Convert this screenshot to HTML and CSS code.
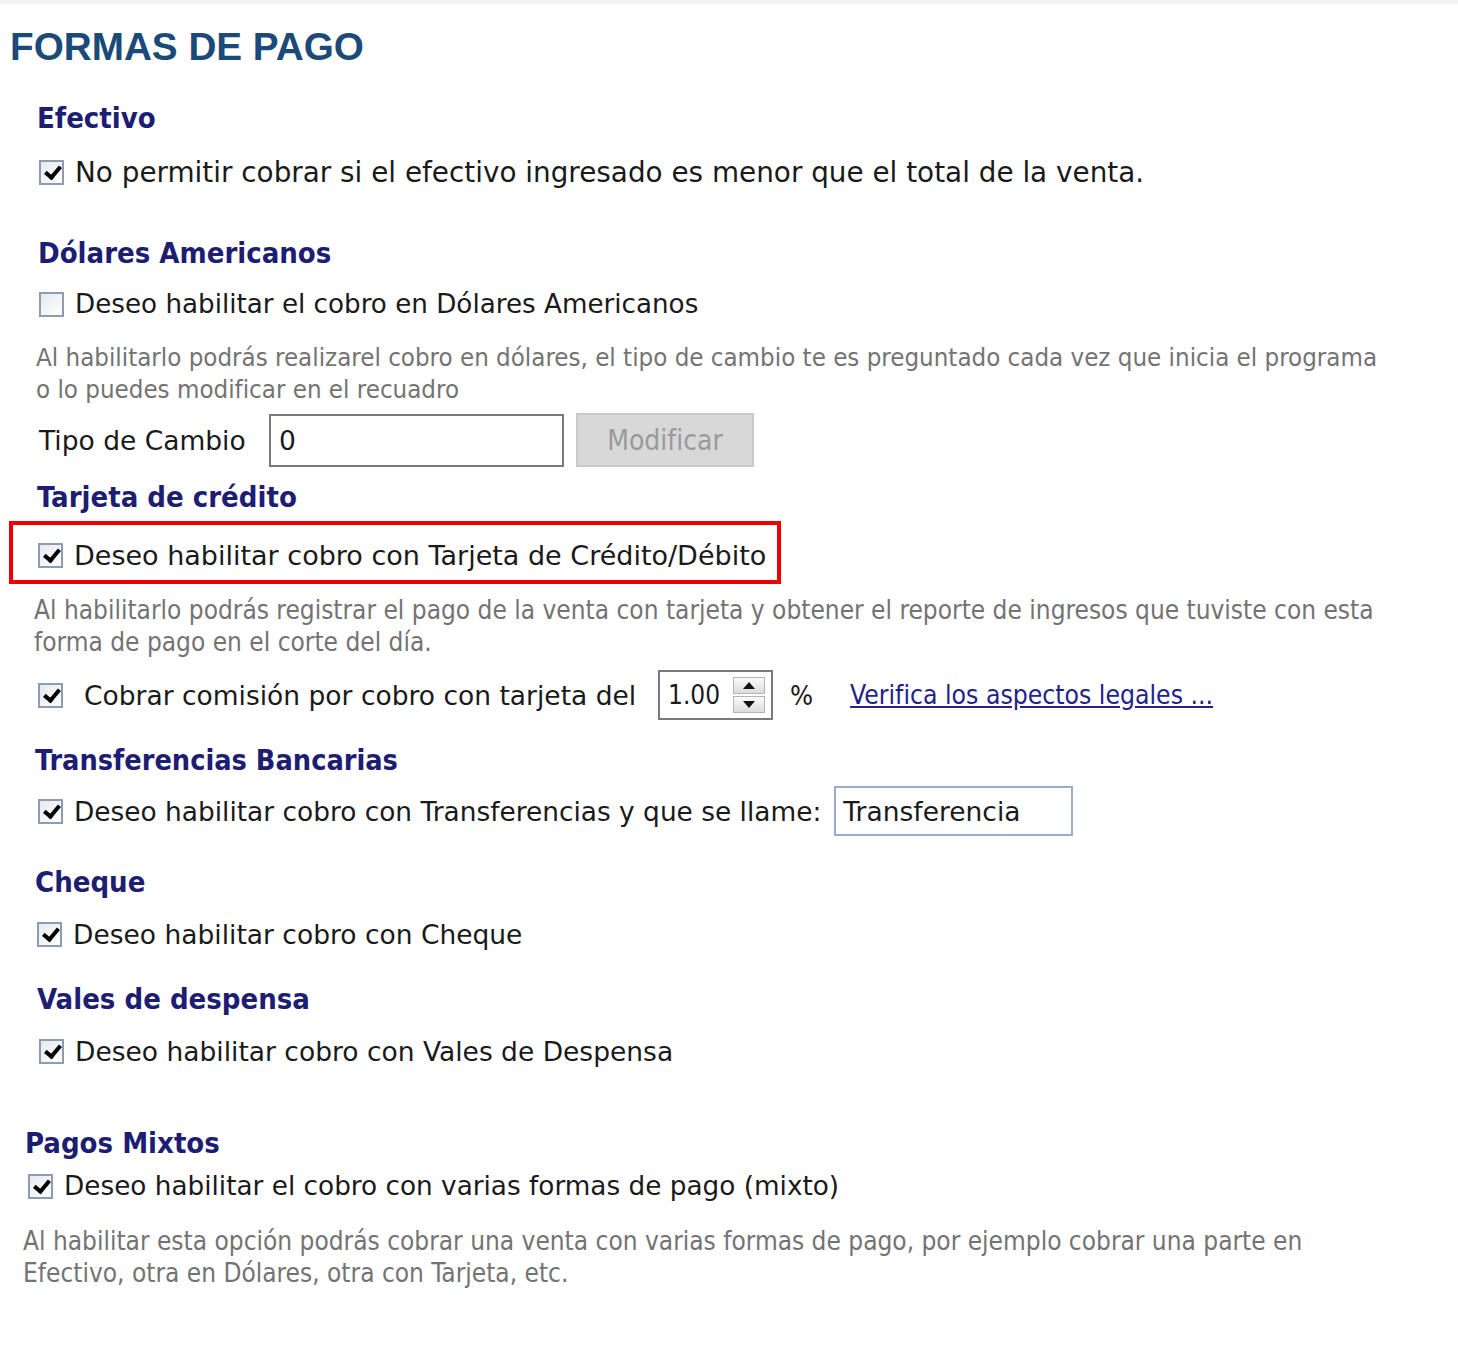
FILE: index.html
```html
<!DOCTYPE html>
<html lang="es">
<head>
    <meta charset="UTF-8">
    <meta name="viewport" content="width=device-width, initial-scale=1.0">
    <title>Formas de pago</title>
    <link rel="stylesheet" href="styles.css">
</head>
<body>
    <div class="page">
        <h1 class="title">FORMAS DE PAGO</h1>

        <!-- Efectivo -->
        <h2 class="sec sec-efectivo">Efectivo</h2>
        <div class="opt opt-efectivo">
            <span class="chk on"></span>
            <span>No permitir cobrar si el efectivo ingresado es menor que el total de la venta.</span>
        </div>

        <!-- Dolares -->
        <h2 class="sec sec-dolares">Dólares Americanos</h2>
        <div class="opt opt-dolares">
            <span class="chk"></span>
            <span>Deseo habilitar el cobro en Dólares Americanos</span>
        </div>
        <p class="desc desc-dolares">Al habilitarlo podrás realizarel cobro en dólares, el tipo de cambio te es preguntado cada vez que inicia el programa<br>o lo puedes modificar en el recuadro</p>
        <div class="tipo-row">
            <span class="tipo-label">Tipo de Cambio</span>
            <span class="field tipo-field">0</span>
            <span class="btn-disabled">Modificar</span>
        </div>

        <!-- Tarjeta -->
        <h2 class="sec sec-tarjeta">Tarjeta de crédito</h2>
        <div class="highlight">
            <div class="opt">
                <span class="chk on"></span>
                <span>Deseo habilitar cobro con Tarjeta de Crédito/Débito</span>
            </div>
        </div>
        <p class="desc desc-tarjeta">Al habilitarlo podrás registrar el pago de la venta con tarjeta y obtener el reporte de ingresos que tuviste con esta<br>forma de pago en el corte del día.</p>
        <div class="opt comision-row">
            <span class="chk on"></span>
            <span class="comision-text">Cobrar comisión por cobro con tarjeta del</span>
            <span class="spinner">
                <span class="spin-val">1.00</span>
                <span class="spin-btns">
                    <span class="spin-btn"><svg width="12" height="7" viewBox="0 0 12 7"><path d="M6 0 L12 7 L0 7 Z" fill="#111"/></svg></span>
                    <span class="spin-btn"><svg width="12" height="7" viewBox="0 0 12 7"><path d="M0 0 L12 0 L6 7 Z" fill="#111"/></svg></span>
                </span>
            </span>
            <span class="pct">%</span>
            <a class="legal" href="#">Verifica los aspectos legales ...</a>
        </div>

        <!-- Transferencias -->
        <h2 class="sec sec-transf">Transferencias Bancarias</h2>
        <div class="opt transf-row">
            <span class="chk on"></span>
            <span>Deseo habilitar cobro con Transferencias y que se llame:</span>
            <span class="field transf-field">Transferencia</span>
        </div>

        <!-- Cheque -->
        <h2 class="sec sec-cheque">Cheque</h2>
        <div class="opt opt-cheque">
            <span class="chk on"></span>
            <span>Deseo habilitar cobro con Cheque</span>
        </div>

        <!-- Vales -->
        <h2 class="sec sec-vales">Vales de despensa</h2>
        <div class="opt opt-vales">
            <span class="chk on"></span>
            <span>Deseo habilitar cobro con Vales de Despensa</span>
        </div>

        <!-- Mixtos -->
        <div class="mixtos">
            <h2 class="sec sec-mixtos">Pagos Mixtos</h2>
            <div class="opt opt-mixtos">
                <span class="chk on"></span>
                <span>Deseo habilitar el cobro con varias formas de pago (mixto)</span>
            </div>
            <p class="desc desc-mixtos">Al habilitar esta opción podrás cobrar una venta con varias formas de pago, por ejemplo cobrar una parte en<br>Efectivo, otra en Dólares, otra con Tarjeta, etc.</p>
        </div>
    </div>
</body>
</html>
```

FILE: styles.css
```css
body {
    margin: 0;
    background: #fff;
    font-family: "DejaVu Sans", sans-serif;
    color: #1a1a1a;
}

.page {
    padding: 0 0 40px 37px;
    border-top: 4px solid #f3f3f3;
}

/* Title */
.title {
    margin: 19px 0 0 -27px;
    height: 48px;
    line-height: 48px;
    font-family: "Liberation Sans", Arial, sans-serif;
    font-size: 38.7px;
    font-weight: bold;
    color: #1b4a78;
}

/* Section headings */
.sec {
    margin: 0;
    height: 40px;
    line-height: 40px;
    font-size: 29px;
    font-stretch: condensed;
    font-weight: bold;
    color: #1d1d74;
}

.sec-efectivo { margin-top: 27px; }
.sec-dolares { margin-top: 39px; margin-left: 1px; }
.sec-tarjeta { margin-top: 10px; }
.sec-transf { margin-top: 20px; margin-left: -2px; font-size: 28.6px; }
.sec-cheque { margin-top: 26px; margin-left: -2px; }
.sec-vales { margin-top: 23px; }

/* Checkbox rows */
.opt {
    display: flex;
    align-items: center;
    height: 44px;
    font-size: 26.5px;
    white-space: nowrap;
}

.opt-efectivo { margin-top: 12px; margin-left: 2px; font-size: 27.85px; }
.opt-dolares { margin-top: 9px; margin-left: 2px; font-size: 26.2px; }
.opt-cheque { margin-top: 10px; }
.opt-vales { margin-top: 10px; margin-left: 2px; }

.chk {
    box-sizing: border-box;
    width: 25px;
    height: 25px;
    margin-right: 11px;
    border: 2px solid #8b9cb3;
    background: linear-gradient(135deg, #e6e9ee, #fff);
    flex: none;
    position: relative;
}

.chk.on::after {
    content: "";
    position: absolute;
    left: 7px;
    top: 1px;
    width: 6px;
    height: 12px;
    border: solid #000;
    border-width: 0 4px 4px 0;
    transform: rotate(40deg);
}

/* Descriptions */
.desc {
    margin: 0;
    font-size: 25.8px;
    font-stretch: condensed;
    line-height: 32px;
    color: #737373;
    white-space: nowrap;
}

.desc-dolares { margin-top: 15px; margin-left: -1px; font-size: 25.65px; }
.desc-tarjeta { margin-top: 10px; margin-left: -3px; font-size: 26px; }

/* Tipo de cambio */
.tipo-row {
    display: flex;
    align-items: center;
    height: 54px;
    margin-top: 8px;
    margin-left: 2px;
    font-size: 26.5px;
}

.tipo-label {
    width: 230px;
}

.field {
    box-sizing: border-box;
    display: flex;
    align-items: center;
    background: #fff;
    font-size: 26.5px;
}

.tipo-field {
    width: 295px;
    height: 53px;
    padding-left: 8px;
    border: 2px solid #7a7a7a;
}

.btn-disabled {
    box-sizing: border-box;
    width: 178px;
    height: 54px;
    margin-left: 12px;
    display: flex;
    align-items: center;
    justify-content: center;
    background: #d8d8d8;
    border: 2px solid #c9c9c9;
    color: #9a9a9a;
    font-size: 28px;
    font-stretch: condensed;
}

/* Highlight box */
.highlight {
    box-sizing: border-box;
    width: 772px;
    height: 63px;
    margin: 4px 0 0 -28px;
    padding: 8px 0 0 25px;
    border: 4px solid #ee0000;
}

.highlight .opt {
    height: 44px;
    font-size: 27px;
}

/* Commission row */
.comision-row {
    height: 50px;
    margin-top: 12px;
    margin-left: 1px;
}

.comision-row .chk {
    margin-right: 21px;
}

.comision-text {
    width: 574px;
}

.spinner {
    box-sizing: border-box;
    width: 115px;
    height: 50px;
    display: flex;
    align-items: center;
    justify-content: space-between;
    padding: 0 6px 0 8px;
    border: 2px solid #7a7a7a;
    font-size: 26px;
    font-stretch: condensed;
}

.spin-btns {
    display: flex;
    flex-direction: column;
    gap: 2px;
}

.spin-btn {
    box-sizing: border-box;
    width: 32px;
    height: 17px;
    display: flex;
    align-items: center;
    justify-content: center;
    background: linear-gradient(#fafafa, #dcdcdc);
    border: 1px solid #b5b5b5;
}

.pct {
    margin-left: 17px;
    font-size: 27px;
    font-stretch: condensed;
}

.legal {
    margin-left: 37px;
    font-size: 26.3px;
    font-stretch: condensed;
    color: #22228a;
    text-decoration: underline;
}

/* Transferencias */
.transf-row {
    height: 50px;
    margin-top: 6px;
    margin-left: 1px;
    font-size: 26.4px;
}

.transf-field {
    width: 239px;
    height: 50px;
    margin-left: 13px;
    padding-left: 7px;
    border: 2px solid #9aaecb;
}

/* Pagos mixtos */
.mixtos {
    margin-left: -12px;
}

.sec-mixtos { margin-top: 50px; }
.opt-mixtos { margin-top: 1px; margin-left: 3px; font-size: 26.3px; }
.desc-mixtos { margin-top: 17px; margin-left: -2px; font-size: 26px; }
```
